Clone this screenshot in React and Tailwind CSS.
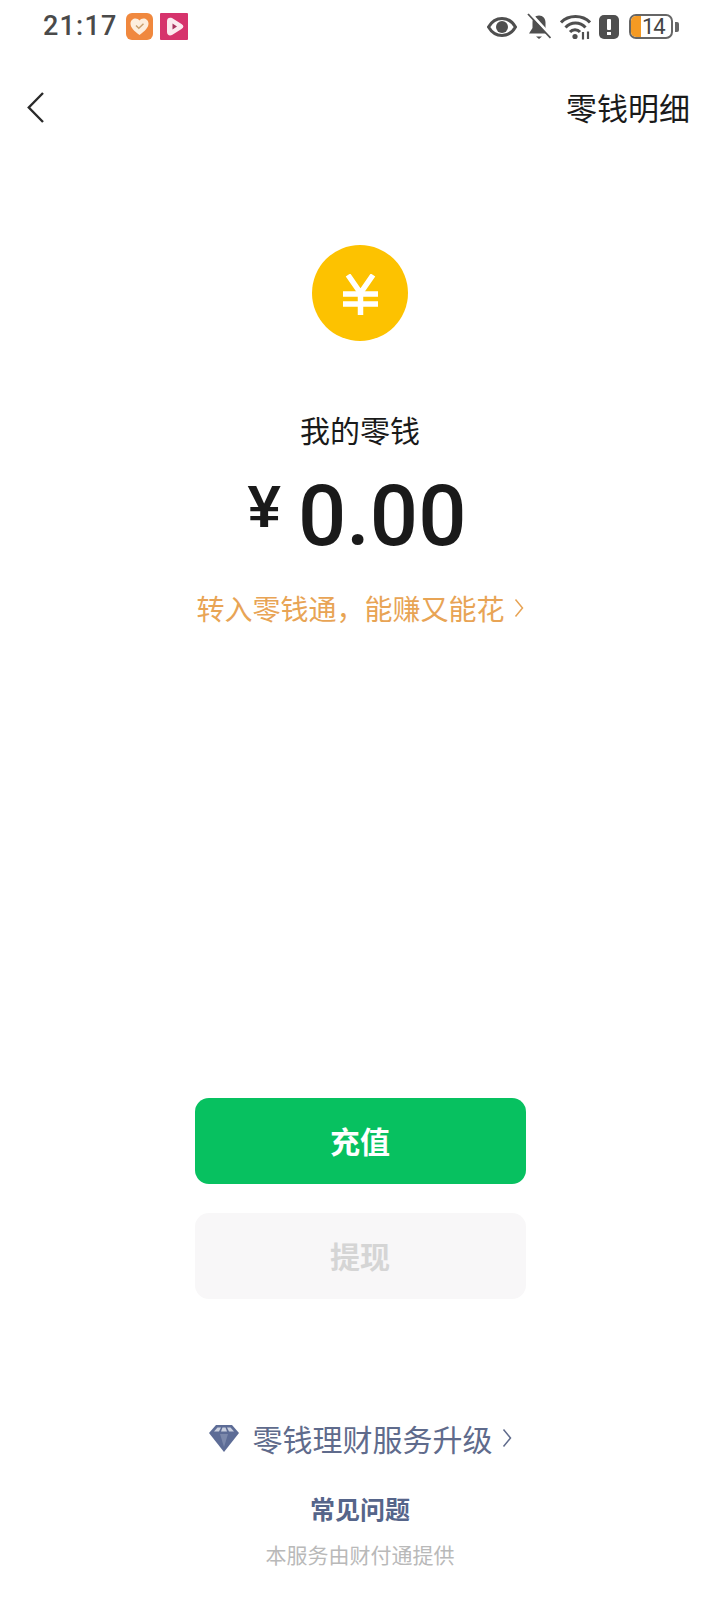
import React from "react";

const cjk = "font-['Noto_Sans_CJK_SC','Noto_Sans',sans-serif]";

const Chevron = ({ className }) => (
  <svg viewBox="0 0 10 20" fill="none" stroke="currentColor" strokeWidth="1.5" className={className}>
    <path d="M1.5 1.5 L8.5 10 L1.5 18.5" />
  </svg>
);

const StatusBar = () => (
  <div className="h-[54px] flex items-start justify-between pl-[43px] pr-[41px] pt-[13px]">
    <div className="flex items-center">
      <span className="font-['Roboto',sans-serif] font-medium text-[27px] leading-[27px] tracking-[1.2px] text-[#4a4a4a]">21:17</span>
      <svg viewBox="0 0 27 27" className="w-[27px] h-[27px] ml-[8px]">
        <rect width="27" height="27" rx="6" fill="#f0883e" />
        <path d="M13.5 22 C8 18 4.5 14.5 4.5 10.5 C4.5 7.5 7 5.5 9.5 5.5 C11.2 5.5 12.7 6.3 13.5 7.6 C14.3 6.3 15.8 5.5 17.5 5.5 C20 5.5 22.5 7.5 22.5 10.5 C22.5 14.5 19 18 13.5 22 Z" fill="#fdeedd" />
        <path d="M10 12.5 L12.8 15.2 L17.5 10.8" fill="none" stroke="#c9a06e" strokeWidth="1.5" />
      </svg>
      <svg viewBox="0 0 28 27" className="w-[28px] h-[27px] ml-[7px]">
        <rect width="28" height="27" rx="1" fill="#d6336c" />
        <path d="M7 8 C7 5 9.5 4 12 5 L21.5 11 C24 12.6 24 14.6 21.5 16 L12 22 C9.5 23.2 7 22 7 19 Z" fill="#fbe9ef" />
        <path d="M12.5 10.5 L17 13.5 L12.5 16.5 Z" fill="#a8315e" />
      </svg>
    </div>
    <div className="flex items-center text-[#4f4f4f] h-[27px]">
      <svg viewBox="0 0 30 20" className="w-[30px] h-[20px]">
        <path d="M1.5 10 C5 4 10 1.5 15 1.5 C20 1.5 25 4 28.5 10 C25 16 20 18.5 15 18.5 C10 18.5 5 16 1.5 10 Z" fill="none" stroke="currentColor" strokeWidth="3" />
        <circle cx="15" cy="10" r="6" fill="currentColor" />
      </svg>
      <svg viewBox="0 0 24 28" className="w-[24px] h-[28px] ml-[10px]">
        <path d="M12 2.5 C8 2.5 5.5 5.5 5.5 9.5 L5.5 15 L2 20.5 L22 20.5 L18.5 15 L18.5 9.5 C18.5 5.5 16 2.5 12 2.5 Z" fill="currentColor" />
        <path d="M9 23.5 L15 23.5 L12 26 Z" fill="currentColor" />
        <path d="M3 0 L24.5 23.5" stroke="#ffffff" strokeWidth="3" />
        <path d="M1 1 L23.5 25" stroke="currentColor" strokeWidth="1.8" />
      </svg>
      <svg viewBox="0 0 31 26" fill="none" stroke="currentColor" className="w-[31px] h-[26px] ml-[9px]">
        <path d="M1 8.5 C8.5 0.5 22.5 0.5 30 8.5" strokeWidth="3" />
        <path d="M5.5 13.5 C11 7.5 20 7.5 25.5 13.5" strokeWidth="3" />
        <path d="M10 18 C12.5 15 17.5 15 20 18" strokeWidth="3" />
        <circle cx="15" cy="22.5" r="2.6" fill="currentColor" stroke="none" />
        <path d="M23 18 L23 25.5 M28 17.5 L28 25" strokeWidth="2.2" />
      </svg>
      <div className="w-[20px] h-[24px] ml-[8px] rounded-[5px] bg-[#4f4f4f] flex flex-col items-center justify-center gap-[2px]">
        <div className="w-[4px] h-[11px] bg-white rounded-[1px]" />
        <div className="w-[4px] h-[3px] bg-white" />
      </div>
      <div className="w-[44px] h-[25px] ml-[10px] rounded-[7px] border-2 border-[#666666] flex items-center overflow-hidden">
        <div className="w-[10px] h-full bg-[#f59a23]" />
        <span className="font-['Roboto',sans-serif] text-[22px] leading-[21px] text-[#444444] ml-[1px] tracking-[-1px]">14</span>
      </div>
      <div className="w-[4px] h-[10px] ml-[2px] bg-[#666666] rounded-r-[2px]" />
    </div>
  </div>
);

const Diamond = () => (
  <svg viewBox="0 0 30 28" className="w-[30px] h-[28px]">
    <path d="M7 1 L23 1 L30 9 L15 28 L0 9 Z" fill="#5d6c96" />
    <path d="M8.5 3.5 L12 3.5 L10 7.5 L5 7.5 Z M18 3.5 L21.5 3.5 L25 7.5 L20 7.5 Z M13.5 3.5 L16.5 3.5 L18 7.5 L12 7.5 Z" fill="#c9cfde" />
    <path d="M11 10 L19 10 L15 23 Z" fill="#7b88ab" />
  </svg>
);

export default function App() {
  return (
    <div className={`w-[720px] h-[1612px] bg-white flex flex-col overflow-hidden ${cjk}`}>
      <StatusBar />

      {/* nav */}
      <div className="h-[106px] flex items-start justify-between pl-[27px] pr-[30px] pt-[38px] text-[#1a1a1a]">
        <svg viewBox="0 0 17 31" fill="none" stroke="#2a2a2a" strokeWidth="2.4" className="w-[17px] h-[31px]">
          <path d="M16 1 L1.8 15.5 L16 30" />
        </svg>
        <span className="text-[31px] leading-[30px]">零钱明细</span>
      </div>

      {/* balance */}
      <div className="flex flex-col items-center mt-[85px]">
        <div className="w-[96px] h-[96px] rounded-full bg-[#fdc200] flex items-center justify-center">
          <svg viewBox="0 0 35 41" fill="none" stroke="#ffffff" strokeWidth="5.5" className="w-[35px] h-[41px] mt-[2px]">
            <path d="M5 1 L17.5 19 L30 1" />
            <path d="M0 20 H35 M0 30 H35" />
            <path d="M17.5 18 V41" />
          </svg>
        </div>
        <div className="mt-[69px] text-[30px] leading-[38px] text-[#1a1a1a]">我的零钱</div>
        <div className="mt-[24px] h-[88px] flex items-center text-[#1a1a1a] pr-[6px]">
          <span className="font-['Liberation_Sans',sans-serif] font-bold text-[60px] leading-none mr-[17px] mb-[18px]">¥</span>
          <span className="font-['Roboto',sans-serif] font-medium text-[85px] leading-[88px]">0.00</span>
        </div>
        <div className="mt-[29px] flex items-center text-[#e8a455]">
          <span className="text-[28px] leading-[38px]">转入零钱通，能赚又能花</span>
          <Chevron className="w-[10px] h-[20px] ml-[9px]" />
        </div>
      </div>

      {/* buttons */}
      <div className="flex flex-col items-center mt-[471px] gap-[29px]">
        <button className="w-[331px] h-[86px] rounded-[14px] bg-[#07c160] text-white text-[30px] font-bold pb-[2px]">充值</button>
        <button className="w-[331px] h-[86px] rounded-[14px] bg-[#f8f7f8] text-[#d5d5d5] text-[30px] font-bold pb-[2px]">提现</button>
      </div>

      {/* footer */}
      <div className="flex flex-col items-center mt-[120px]">
        <div className="flex items-center text-[#5f6b8c] h-[38px]">
          <Diamond />
          <span className="text-[30px] leading-[38px] ml-[14px]">零钱理财服务升级</span>
          <Chevron className="w-[10px] h-[20px] ml-[9px]" />
        </div>
        <div className="mt-[36px] text-[25px] leading-[30px] font-bold text-[#56658a]">常见问题</div>
        <div className="mt-[17px] text-[21px] leading-[28px] text-[#b9b9b9]">本服务由财付通提供</div>
      </div>
    </div>
  );
}
